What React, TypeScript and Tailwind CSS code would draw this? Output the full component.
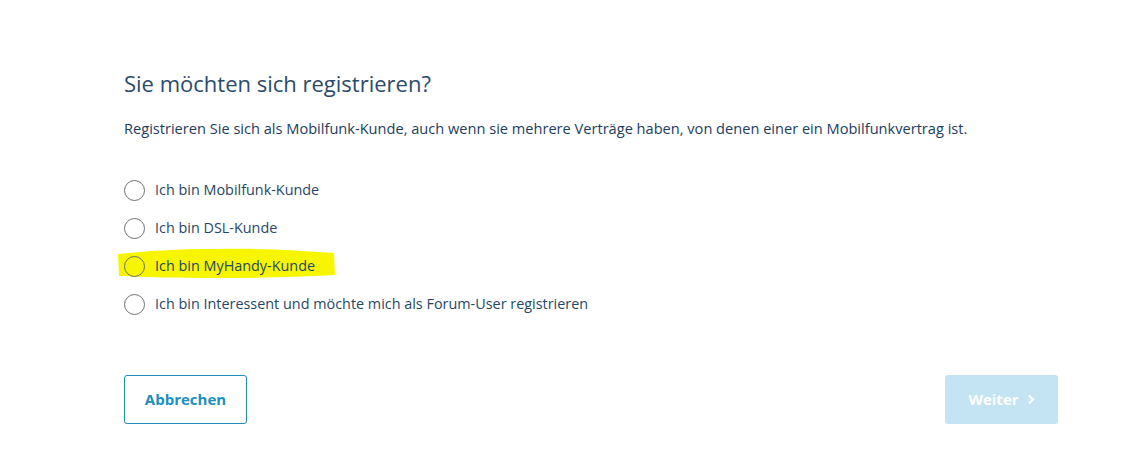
import { useState } from 'react';

const options = [
  { id: 'mobil', label: 'Ich bin Mobilfunk-Kunde' },
  { id: 'dsl', label: 'Ich bin DSL-Kunde' },
  { id: 'myhandy', label: 'Ich bin MyHandy-Kunde', marked: true },
  { id: 'forum', label: 'Ich bin Interessent und möchte mich als Forum-User registrieren' },
];

const Highlight = () => (
  <svg
    className="absolute left-[-8px] top-[-8px] w-[220px] h-[30px] pointer-events-none"
    viewBox="0 0 220 30"
    preserveAspectRatio="none"
  >
    <path
      d="M2 6 C30 3 60 1 100 1 C140 0 180 2 218 5 L219 27 C180 29 140 30 100 30 C60 30 30 29 3 28 Z"
      fill="#f8f500"
    />
  </svg>
);

export default function App() {
  const [selected, setSelected] = useState<string | null>(null);

  return (
    <div className="w-[1133px] h-[467px] bg-white font-['Open_Sans',sans-serif] text-[#1d3d5f]">
      <div className="pl-[124px] pr-[75px] pt-[66px]">
        <h1 className="text-[22px] leading-[34px] font-normal text-[#2a4b6c]">Sie möchten sich registrieren?</h1>
        <p className="mt-[18px] text-[14.6px] leading-[20px]">
          Registrieren Sie sich als Mobilfunk-Kunde, auch wenn sie mehrere Verträge haben, von denen einer ein Mobilfunkvertrag ist.
        </p>

        <div className="mt-[42px] flex flex-col gap-[18px]">
          {options.map(o => (
            <label key={o.id} className="relative flex items-center gap-[10px] h-[20px] cursor-pointer">
              {o.marked && <Highlight />}
              <span
                className="relative w-[21px] h-[21px] rounded-full border border-[#6f6f6f] flex items-center justify-center"
                onClick={() => setSelected(o.id)}
              >
                {selected === o.id && <span className="w-[11px] h-[11px] rounded-full bg-[#0a8fc4]" />}
              </span>
              <span className="relative text-[14.4px] leading-[20px] text-[#1f4868]">{o.label}</span>
            </label>
          ))}
        </div>

        <div className="mt-[61px] flex justify-between">
          <button className="w-[123px] h-[49px] rounded-[3px] border border-[#1b8fc0] text-[#1b8fc0] text-[15px] font-bold bg-white">
            Abbrechen
          </button>
          <button
            className="w-[113px] h-[49px] rounded-[3px] bg-[#c4e4f3] text-white text-[15px] font-bold flex items-center justify-center gap-[8px]"
            disabled={!selected}
          >
            Weiter
            <svg width="8" height="11" viewBox="0 0 8 11">
              <path d="M2 1.5 L6 5.5 L2 9.5" fill="none" stroke="white" strokeWidth="2.2" />
            </svg>
          </button>
        </div>
      </div>
    </div>
  );
}
